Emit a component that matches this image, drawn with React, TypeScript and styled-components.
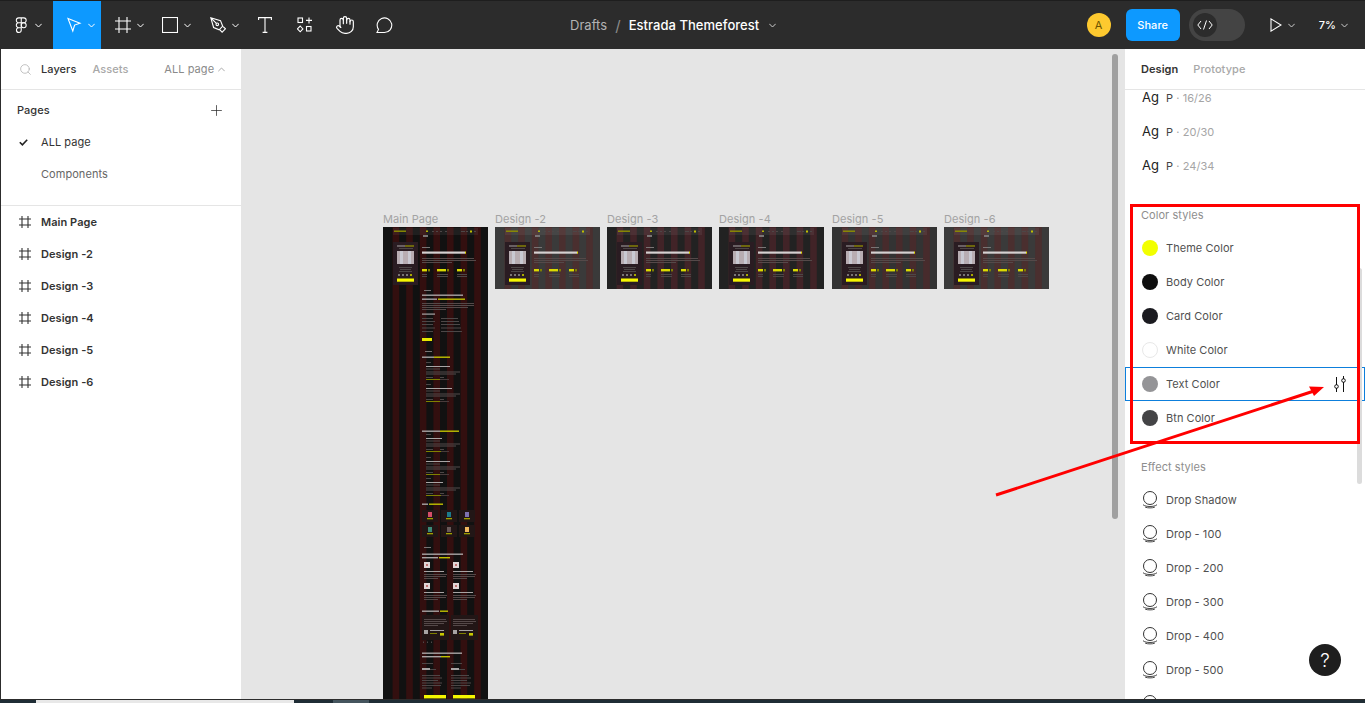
import React from "react";
import styled, { createGlobalStyle } from "styled-components";
import { Hand, Search, Plus } from "lucide-react";

const Global = createGlobalStyle`
  html, body { margin: 0; padding: 0; background: #1f2d35; overflow: hidden; }
  * { box-sizing: border-box; }
  body { font-family: Inter, "Liberation Sans", sans-serif; font-size: 11px; letter-spacing: .005em; }
`;

const Frame = styled.div`
  position: relative; width: 1365px; height: 703px; display: flex; flex-direction: column; overflow: hidden;
`;
const TopBar = styled.header`
  flex: 0 0 49px; display: flex; align-items: center; background: #2c2c2c; border-top: 1px solid #1e1e1e; padding-left: 1px; color: #fff;
`;
const LogoCell = styled.div`
  width: 52px; height: 48px; display: flex; align-items: center; padding-left: 14px; gap: 7px;
`;
const ToolCell = styled.div<{ $w?: number; $active?: boolean }>`
  width: ${p => p.$w ?? 48}px; height: 48px; display: flex; align-items: center;
  justify-content: ${p => (p.$w ? "center" : "flex-start")};
  padding-left: ${p => (p.$w ? 0 : 13)}px; gap: 6px;
  background: ${p => (p.$active ? "#0d99ff" : "transparent")};
`;
const Title = styled.div`
  margin-left: 165px; display: flex; align-items: center; font-size: 13px; height: 48px; letter-spacing: .003em;
`;
const Crumb = styled.span`color: #b3b3b3;`;
const Slash = styled.span`color: #8c8c8c; margin: 0 8px 0 8px; font-size: 15px;`;
const DocName = styled.span`color: #fff; font-weight: 500; margin-right: 10px;`;
const RightTools = styled.div`
  margin-left: auto; display: flex; align-items: center; height: 48px; padding-right: 17px;
`;
const Avatar = styled.div`
  width: 24px; height: 24px; border-radius: 50%; background: #fdc92f; color: #6b5200; display: flex; align-items: center; justify-content: center; font-size: 11px; margin-right: 15px;
`;
const ShareButton = styled.div`
  width: 54px; height: 32px; border-radius: 6px; background: #0d99ff; color: #fff; font-weight: 500; display: flex; align-items: center; justify-content: center; margin-right: 9px;
`;
const CodeToggle = styled.div`
  width: 56px; height: 32px; border-radius: 16px; background: #444; padding: 4px; margin-right: 25px;
`;
const Knob = styled.div`
  width: 24px; height: 24px; border-radius: 50%; background: #2c2c2c; display: flex; align-items: center; justify-content: center;
`;
const PlayGroup = styled.div`
  display: flex; align-items: center; gap: 6px; margin-right: 24px;
`;
const Zoom = styled.div`
  display: flex; align-items: center; gap: 5px; font-weight: 500; color: #fff;
`;

const Body = styled.div`
  flex: 0 0 651px; display: flex; border-left: 1px solid #2c2c2c; border-bottom: 1px solid #2c2c2c; min-height: 0;
`;
const LeftPanel = styled.aside`
  flex: 0 0 240px; background: #fff; display: flex; flex-direction: column;
`;
const PanelHeader = styled.div`
  flex: 0 0 41px; display: flex; align-items: center; border-bottom: 1px solid #e5e5e5;
`;
const LeftHeader = styled(PanelHeader)`padding-left: 18px; color: #b3b3b3;`;
const Tab = styled.span<{ $on?: boolean; $gap?: number }>`
  font-weight: 500;
  color: ${p => (p.$on ? "#333" : "#a8a8a8")};
  margin-right: ${p => p.$gap ?? 16}px;
`;
const PageSwitch = styled.span`
  color: #8a8a8a; margin-left: 36px; display: flex; align-items: center; gap: 4px;
`;
const PagesBlock = styled.div`
  padding: 4px 0 15px; border-bottom: 1px solid #e5e5e5;
`;
const PagesTitle = styled.div`
  height: 32px; display: flex; align-items: center; justify-content: space-between; padding: 0 16px 0 16px; color: #333; font-weight: 500;
`;
const PageRow = styled.div<{ $muted?: boolean }>`
  height: 32px; display: flex; align-items: center; color: ${p => (p.$muted ? "#666" : "#333")};
`;
const CheckSlot = styled.span`
  width: 40px; display: flex; justify-content: flex-end; padding-right: 13px;
`;
const LayerRow = styled.div`
  height: 32px; display: flex; align-items: center; color: #333; font-weight: 600; gap: 10px; padding-left: 18px;
`;

const Canvas = styled.main`
  position: relative; flex: 1; background: #e5e5e5; overflow: hidden;
`;
const BoardLabel = styled.div<{ $x: number }>`
  position: absolute; left: ${p => p.$x}px; top: 163px; color: #a3a3a3; font-size: 11px;
`;
const Board = styled.svg<{ $x: number }>`
  position: absolute; left: ${p => p.$x}px; top: 178px; display: block;
`;
const CanvasScroll = styled.div`
  position: absolute; left: 871px; top: 5px; width: 6px; height: 465px; border-radius: 3px; background: #a0a0a0;
`;

const RightPanel = styled.aside`
  position: relative; flex: 0 0 240px; background: #fff; display: flex; flex-direction: column; overflow: hidden;
`;
const RightHeader = styled(PanelHeader)`padding-left: 16px;`;
const DesignTab = styled.span`font-weight: 600; color: #333; margin-right: 15px;`;
const ProtoTab = styled.span`font-weight: 500; color: #a8a8a8;`;
const StyleScroll = styled.div`flex: 1; overflow: hidden;`;
const StyleList = styled.div`margin-top: -9px;`;
const SectionLabel = styled.div`
  height: 32px; display: flex; align-items: center; padding-left: 16px; margin-top: 16px; color: #8e8e8e;
`;
const StyleRow = styled.div<{ $selected?: boolean }>`
  position: relative; height: 34px; display: flex; align-items: center; padding-left: 17px; gap: 8px; color: #505050;
  ${p => (p.$selected ? "outline: 1px solid #0d7fdc; outline-offset: -1px;" : "")}
`;
const AgLabel = styled.span`
  width: 18px; font-size: 13px; font-weight: 400; color: #222; letter-spacing: .01em; margin-right: -2px; margin-top: -3px;
`;
const AgName = styled.span`color: #444;`;
const AgSize = styled.span`color: #a5a5a5;`;
const Swatch = styled.span<{ $c: string; $line?: boolean }>`
  width: 16px; height: 16px; border-radius: 50%; background: ${p => p.$c};
  ${p => (p.$line ? "border: 1px solid #e8e8e8;" : "")}
`;
const RowAction = styled.span`
  position: absolute; right: 18px; top: 9px; display: flex;
`;
const PanelScroll = styled.div`
  position: absolute; right: 3px; top: 219px; width: 5px; height: 216px; border-radius: 3px; background: #dcdcdc;
`;
const HelpButton = styled.div`
  position: absolute; left: 184px; top: 595px; width: 32px; height: 32px; border-radius: 50%; background: #1e1e1e; color: #fff; font-size: 19px; font-weight: 300; display: flex; align-items: center; justify-content: center;
`;

const BottomStrip = styled.div`
  flex: 0 0 3px; background: #1f2d35; display: flex;
`;
const StripLight = styled.div`margin-left: 36px; width: 258px; background: #e8e8e8;`;
const StripGrey = styled.div`margin-left: 39px; width: 36px; background: #45555e;`;

const Annotation = styled.svg`
  position: absolute; left: 0; top: 0; width: 1365px; height: 703px; pointer-events: none;
`;

const Chevron = ({ up, color = "#fff" }: { up?: boolean; color?: string }) => (
  <svg width="7" height="5" viewBox="0 0 7 5" fill="none">
    <path d={up ? "M.3 4.2 3.5 1l3.2 3.2" : "M.3.8 3.5 4 6.7.8"} stroke={color} />
  </svg>
);
const FigmaLogo = () => (
  <svg width="12.5" height="16" viewBox="0 0 14 18" fill="none" stroke="#fff" strokeWidth="1.2">
    <path d="M7 1H4.2a2.7 2.7 0 0 0 0 5.5H7zM7 1h2.8a2.7 2.7 0 0 1 0 5.5H7zM7 6.5H4.2a2.7 2.7 0 0 0 0 5.5H7zM7 12H4.2A2.7 2.7 0 1 0 7 14.7z" />
    <circle cx="9.8" cy="9.25" r="2.75" />
  </svg>
);
const MoveIcon = () => (
  <svg width="16" height="16" viewBox="0 0 16 16" fill="none" stroke="#fff" strokeWidth="1.1">
    <path d="M2 1.5 14 6.2 8.6 8.1 6.8 14z" />
  </svg>
);
const FrameIcon = () => (
  <svg width="17" height="18" viewBox="0 0 17 18" fill="none" stroke="#fff" strokeWidth="1.1">
    <path d="M5 1v16M13 1v16M1 5h16M1 13h16" />
  </svg>
);
const RectIcon = () => (
  <svg width="16" height="16" viewBox="0 0 16 16" fill="none" stroke="#fff" strokeWidth="1.1">
    <rect x=".5" y=".5" width="15" height="15" />
  </svg>
);
const PenIcon = () => (
  <svg width="16" height="16" viewBox="0 0 16 16" fill="none" stroke="#fff" strokeWidth="1.1">
    <path d="M.8.8 10.5 3.6l2.2 5.6-3.5 3.6-5.6-2.3zM.8.8l5.6 5.6" />
    <circle cx="7.3" cy="7.3" r="1.3" />
    <path d="m13.2 9.6 2.2 2.2-3.3 3.3-2.2-2.2" />
  </svg>
);
const TextIcon = () => (
  <svg width="14" height="16" viewBox="0 0 14 16" fill="none" stroke="#fff" strokeWidth="1.1">
    <path d="M.6 3V.6h12.8V3M7 .6v14.8M4.6 15.4h4.8" />
  </svg>
);
const ResourcesIcon = () => (
  <svg width="16" height="16" viewBox="0 0 16 16" fill="none" stroke="#fff" strokeWidth="1.1">
    <rect x="1" y="1" width="4.5" height="4.5" />
    <path d="M12 .5v6M9 3.4h6" />
    <path d="m3.2 9 2.7 2.9-2.7 2.9L.4 11.9z" />
    <rect x="9.5" y="9.5" width="4.5" height="4.5" />
  </svg>
);
const CommentIcon = () => (
  <svg width="18" height="18" viewBox="0 0 18 18" fill="none" stroke="#fff" strokeWidth="1.1">
    <path d="M1 16.5h7.5a7.3 7.3 0 1 0-6-3.1z" />
  </svg>
);
const CodeIcon = () => (
  <svg width="16" height="10" viewBox="0 0 16 10" fill="none" stroke="#fff" strokeWidth="1">
    <path d="M4 1 .8 5 4 9M12 1l3.2 4L12 9M9.5.5l-3 9" />
  </svg>
);
const PlayIcon = () => (
  <svg width="12" height="14" viewBox="0 0 12 14" fill="none" stroke="#fff" strokeWidth="1.1">
    <path d="M1 .9 11 7 1 13.1z" />
  </svg>
);
const CheckIcon = () => (
  <svg width="9" height="7" viewBox="0 0 9 7" fill="none" stroke="#222" strokeWidth="1.6">
    <path d="m.8 3.2 2.6 2.6L8.2.8" />
  </svg>
);
const HashIcon = () => (
  <svg width="12" height="12" viewBox="0 0 12 12" fill="none" stroke="#333" strokeWidth="1.1">
    <path d="M3 0v12M9 0v12M0 3h12M0 9h12" />
  </svg>
);
const DropIcon = () => (
  <svg width="16" height="18" viewBox="0 0 16 18" fill="none" stroke="#333" strokeWidth="1">
    <circle cx="8" cy="7" r="6.5" />
    <path d="M1 13.7c1.5 1.3 4.2 1.8 7 1.8s5.500-.5 7-1.800M3.200 16.200c1.500.5 3.200.7 4.800.7s3.300-.2 4.800-.7" strokeWidth=".9" />
  </svg>
);
const SlidersIcon = () => (
  <svg width="14" height="16" viewBox="0 0 14 16" fill="none" stroke="#111" strokeWidth="1">
    <path d="M3.500 1v8M3.500 12v4M10.500 0v3M10.500 6v10" />
    <circle cx="3.500" cy="10.500" r="1.800" />
    <circle cx="10.500" cy="4.500" r="1.800" />
  </svg>
);

type R = [number, number, number, number, string];
const W = "#a8a4a4";
const G = "#4e4646";
const P = "#544a4a";
const Y = "#dada00";
const O = "#808000";

const stripes = (c: string, h: number): R[] =>
  [0, 1, 2, 3, 4, 5, 6].map(i => [9.6 + i * 13.6, 0, 6.6, h, c] as R);

const topContent: R[] = [
  [10, 1, 85, 7, "rgba(255,255,255,.06)"], [11, 3.5, 12, 1.4, "#8f8f00"],
  [43, 3.5, 2, 1.4, "#c0c000"], [49, 4, 2, 1, G], [53, 4, 2, 1, G], [57, 4, 2, 1, G], [62, 4, 2, 1, G],
  [78, 4, 4, 1, G], [83, 4, 2, 1, G], [87, 3.5, 2, 2, "#c0c000"], [91, 4, 2, 1, G],
  [40, 8, 5, 2, "#7a7474"],
  [10, 15, 25, 43, "#2b1d23"],
  [14, 18.5, 8, 1, W], [22, 18.5, 9, 1, "#b0b000"], [16, 21, 14, 1, G],
  [14, 24, 17, 13, "#b8adb2"], [17, 24, 3, 13, "#c9c9d2"], [25, 24, 3, 13, "#c9c9d2"],
  [16, 40, 13, 1, G], [17, 42, 11, 1, G], [16, 44, 13, 1, G],
  [15, 47, 2, 2, "#7a7474"], [19, 47, 2, 2, "#7a7474"], [23, 47, 2, 2, "#7a7474"], [27, 47, 2, 2, "#a8a800"],
  [14, 51.5, 17, 3.2, "#f6f600"],
  [39, 20, 8, 1, "#7a7474"],
  [39, 24.5, 43, 2.2, "#d4d0d0"], [82, 24.5, 1, 2.2, Y],
  [39, 31, 52, 1, P], [39, 33, 54, 1, P], [39, 35, 30, 1, P],
  [39, 42, 5, 2.4, Y], [45, 42, 2, 2.4, O], [54, 42, 9, 2.4, Y], [64, 42, 2, 2.4, O], [74, 42, 5, 2.4, Y], [80, 42, 2, 2.4, O],
  [39, 47, 5, 1, G], [39, 49, 5, 1, G], [54, 47, 11, 1, G], [54, 49, 11, 1, G], [74, 47, 10, 1, G], [74, 49, 10, 1, G],
];

const bar = (y: number, f: number): R[] => [[43, y, 23, 1, "#4a3a3a"], [43, y, f, 1, O]];
const item = (y: number, t: number, f: number): R[] => [
  [43, y, 5, 1, G], [43, y + 4, t, 1, W], [43, y + 6.5, 14, 1, G],
  [43, y + 9.5, 34, 1, P], [43, y + 11.5, 30, 1, P],
  [43, y + 15, 7, 1, G], [57, y + 15, 4, 1, G], ...bar(y + 17, f),
];
const tile = (x: number, y: number, c: string): R[] => [
  [x, y, 16, 12, "#221619"], [x + 6, y + 2, 4, 5, c], [x + 5, y + 8, 6, 1.3, "#a0a000"],
];
const svcCard = (x: number, y: number): R[] => [
  [x, y, 6, 6, "#e0d4d4"], [x + 2, y + 2, 2, 2, "#c07070"], [x, y + 9, 20, 1, W],
  [x, y + 12, 23, 1, P], [x, y + 14, 22, 1, P], [x, y + 16, 14, 1, P],
];
const quote = (x: number): R[] => [
  [x, 388, 27, 25, "#231519"], [x + 2, 392, 22, 1, P], [x + 2, 394, 23, 1, P], [x + 2, 396, 20, 1, P], [x + 2, 398, 14, 1, P],
  [x + 2, 403, 4, 4, "#a8a4a4"], [x + 8, 403, 14, 1, W], [x + 8, 406, 7, 1, O], [x + 18, 406, 4, 2.6, "#c8c800"],
];
const price = (x: number): R[] => [
  [x, 436, 11, 1, G], [x, 441, 8, 2, W], [x + 8, 442, 6, 1, G],
  [x, 448, 18, 1, G], [x, 450.5, 20, 1, G], [x, 453, 16, 1, G], [x, 455.5, 20, 1, G], [x, 458, 19, 1, G], [x, 460.5, 10, 1, G],
  [x + 2, 468, 22, 3.4, "#f6f600"],
];

const lowerContent: R[] = [
  [41, 63, 7, 1, "#7a7474"],
  [39, 67.5, 41, 1.4, W], [39, 71.5, 15, 1.4, W], [55, 71.5, 27, 1.4, "#c0c000"],
  [39, 76, 52, 1, P], [39, 78, 52, 1, P], [39, 80, 46, 1, P], [39, 82, 24, 1, P],
  [39, 86.5, 13, 1.2, W],
  ...[91, 94, 97, 100.5, 104].flatMap((y, i): R[] => [[39, y, 11 + (i % 2) * 2, 1, G], [58, y, 17 + i, 1, G]]),
  [39, 111, 10, 3, "#e8e800"],
  [42, 124, 7, 1, "#7a7474"],
  [39, 129.5, 12, 1.4, W], [51, 129.5, 16, 1.4, "#c0c000"],
  ...item(135, 24, 14), ...item(157, 26, 14),
  [39, 203.5, 18, 1.4, W], [57, 203.5, 19, 1.4, "#c0c000"],
  ...item(207, 16, 15), ...item(230, 24, 14), ...item(251, 17, 15),
  [39, 276.5, 6, 1.4, W], [46, 276.5, 14, 1.4, "#c0c000"],
  ...tile(39, 283, "#d4506a"), ...tile(58, 283, "#1f7a8a"), ...tile(76, 283, "#7d72b0"),
  ...tile(39, 298, "#3e8a78"), ...tile(58, 298, "#6a5a5a"), ...tile(76, 298, "#f0b860"),
  [41, 320, 7, 1, "#7a7474"],
  [39, 326.5, 41, 1.4, W], [39, 330, 16, 1.4, W], [56, 330, 11, 1.4, "#c0c000"],
  ...svcCard(41, 335), ...svcCard(70, 335), ...svcCard(41, 356), ...svcCard(70, 356),
  [39, 383.5, 17, 1.4, W], [57, 383.5, 8, 1.4, "#c0c000"],
  ...quote(39), ...quote(68),
  [40, 414.5, 1, 1.5, G], [44, 414.5, 1, 1.5, G], [48, 414.5, 1, 1.5, G],
  [39, 425.5, 40, 1.4, W], [39, 429, 19, 1.4, W], [58, 429, 9, 1.4, "#c0c000"],
  ...price(39), ...price(68),
];

const Mini = ({ x, tall, id, bg, stripe }: { x: number; tall?: boolean; id: string; bg: string; stripe: string }) => {
  const h = tall ? 473 : 62;
  const rects = tall ? [...topContent, ...lowerContent] : topContent;
  return (
    <Board $x={x} width={105} height={h} viewBox={`0 0 105 ${h}`}>
      <defs>
        <filter id={id} x="-5%" y="-5%" width="110%" height="110%">
          <feGaussianBlur stdDeviation=".55" />
        </filter>
      </defs>
      <rect width="105" height={h} fill={bg} />
      {stripes(stripe, h).map((r, i) => (
        <rect key={i} x={r[0]} y={r[1]} width={r[2]} height={r[3]} fill={r[4]} />
      ))}
      <g filter={`url(#${id})`}>
        {rects.map((r, i) => (
          <rect key={i} x={r[0]} y={r[1]} width={r[2]} height={r[3]} fill={r[4]} />
        ))}
      </g>
    </Board>
  );
};

const boards = [
  { name: "Main Page", x: 142, tall: true, bg: "#111", stripe: "#330f0f" },
  { name: "Design -2", x: 254, bg: "#3a3a3a", stripe: "#4a2f2f" },
  { name: "Design -3", x: 366, bg: "#222", stripe: "#412327" },
  { name: "Design -4", x: 478, bg: "#222", stripe: "#412327" },
  { name: "Design -5", x: 591, bg: "#333", stripe: "#472b2c" },
  { name: "Design -6", x: 703, bg: "#3a3a3a", stripe: "#4a2f2f" },
];
const layers = ["Main Page", "Design -2", "Design -3", "Design -4", "Design -5", "Design -6"];
const typeRows = ["16/26", "20/30", "24/34"];
const colors = [
  { n: "Theme Color", c: "#f2ff00" },
  { n: "Body Color", c: "#0f0f0f" },
  { n: "Card Color", c: "#1b1b20" },
  { n: "White Color", c: "#fff", line: true },
  { n: "Text Color", c: "#949497", sel: true },
  { n: "Btn Color", c: "#444446" },
];
const effects = ["Drop Shadow", "Drop - 100", "Drop - 200", "Drop - 300", "Drop - 400", "Drop - 500", ""];

export default function App() {
  return (
    <Frame>
      <Global />
      <TopBar>
        <LogoCell><FigmaLogo /><Chevron /></LogoCell>
        <ToolCell $active><MoveIcon /><Chevron /></ToolCell>
        <ToolCell><FrameIcon /><Chevron /></ToolCell>
        <ToolCell><RectIcon /><Chevron /></ToolCell>
        <ToolCell><PenIcon /><Chevron /></ToolCell>
        <ToolCell $w={40}><TextIcon /></ToolCell>
        <ToolCell $w={40}><ResourcesIcon /></ToolCell>
        <ToolCell $w={40}><Hand size={20} strokeWidth={1.4} /></ToolCell>
        <ToolCell $w={40}><CommentIcon /></ToolCell>
        <Title>
          <Crumb>Drafts</Crumb><Slash>/</Slash><DocName>Estrada Themeforest</DocName><Chevron color="#ccc" />
        </Title>
        <RightTools>
          <Avatar>A</Avatar>
          <ShareButton>Share</ShareButton>
          <CodeToggle><Knob><CodeIcon /></Knob></CodeToggle>
          <PlayGroup><PlayIcon /><Chevron color="#ccc" /></PlayGroup>
          <Zoom>7%<Chevron color="#ccc" /></Zoom>
        </RightTools>
      </TopBar>
      <Body>
        <LeftPanel>
          <LeftHeader>
            <Search size={13} strokeWidth={1.3} color="#aaa" style={{ marginRight: 9 }} />
            <Tab $on>Layers</Tab>
            <Tab $gap={0}>Assets</Tab>
            <PageSwitch>ALL page <Chevron up color="#aaa" /></PageSwitch>
          </LeftHeader>
          <PagesBlock>
            <PagesTitle>Pages<Plus size={17} strokeWidth={1} color="#222" /></PagesTitle>
            <PageRow><CheckSlot><CheckIcon /></CheckSlot>ALL page</PageRow>
            <PageRow $muted><CheckSlot />Components</PageRow>
          </PagesBlock>
          {layers.map(l => (
            <LayerRow key={l}><HashIcon />{l}</LayerRow>
          ))}
        </LeftPanel>
        <Canvas>
          {boards.map((b, i) => (
            <React.Fragment key={b.name}>
              <BoardLabel $x={b.x}>{b.name}</BoardLabel>
              <Mini x={b.x} tall={b.tall} id={`soft${i}`} bg={b.bg} stripe={b.stripe} />
            </React.Fragment>
          ))}
          <CanvasScroll />
        </Canvas>
        <RightPanel>
          <RightHeader>
            <DesignTab>Design</DesignTab><ProtoTab>Prototype</ProtoTab>
          </RightHeader>
          <StyleScroll>
            <StyleList>
              {typeRows.map(t => (
                <StyleRow key={t}>
                  <AgLabel>Ag</AgLabel>
                  <span><AgName>P</AgName><AgSize> · {t}</AgSize></span>
                </StyleRow>
              ))}
              <SectionLabel>Color styles</SectionLabel>
              {colors.map(c => (
                <StyleRow key={c.n} $selected={c.sel}>
                  <Swatch $c={c.c} $line={c.line} />
                  {c.n}
                  {c.sel && <RowAction><SlidersIcon /></RowAction>}
                </StyleRow>
              ))}
              <SectionLabel>Effect styles</SectionLabel>
              {effects.map((e, i) => (
                <StyleRow key={i}><DropIcon />{e}</StyleRow>
              ))}
            </StyleList>
          </StyleScroll>
          <PanelScroll />
          <HelpButton>?</HelpButton>
        </RightPanel>
      </Body>
      <BottomStrip><StripLight /><StripGrey /></BottomStrip>
      <Annotation viewBox="0 0 1365 703">
        <rect x="1131.5" y="205.5" width="227" height="237" fill="none" stroke="#f00" strokeWidth="3" />
        <path d="M996 495 1314 391" stroke="#f00" strokeWidth="3" fill="none" />
        <path d="M1324 387 1309 386.5 1314 396z" fill="#f00" />
      </Annotation>
    </Frame>
  );
}
